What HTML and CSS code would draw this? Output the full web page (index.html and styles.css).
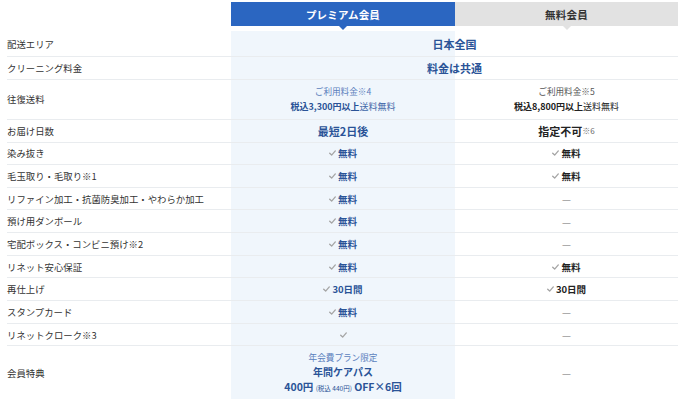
FILE: index.html
```html
<!DOCTYPE html>
<html lang="ja">
<head>
<meta charset="utf-8">
<link rel="stylesheet" href="styles.css">
</head>
<body>
<div class="table">
  <div class="head">
    <div class="hcell hempty"></div>
    <div class="hcell hprem">プレミアム会員</div>
    <div class="hcell hfree">無料会員</div>
  </div>
  <div class="body">
    <div class="row h26">
      <div class="label">配送エリア</div>
      <div class="cell span pv big">日本全国</div>
    </div>
    <div class="row h23">
      <div class="label">クリーニング料金</div>
      <div class="cell span pv big">料金は共通</div>
    </div>
    <div class="row h40">
      <div class="label">往復送料</div>
      <div class="cell col pv">
        <div class="note">ご利用料金※4</div>
        <div class="line"><b>税込3,300円以上</b>送料無料</div>
      </div>
      <div class="cell col fv">
        <div class="note">ご利用料金※5</div>
        <div class="line"><b>税込8,800円以上</b>送料無料</div>
      </div>
    </div>
    <div class="row h23">
      <div class="label">お届け日数</div>
      <div class="cell pv big">最短2日後</div>
      <div class="cell fv big">指定不可<span class="mini">※6</span></div>
    </div>
    <div class="row hs">
      <div class="label">染み抜き</div>
      <div class="cell pv chkv"><svg class="chk" viewBox="0 0 10 8"><path d="M1 4.3L3.8 7L9 1"/></svg>無料</div>
      <div class="cell fv chkv"><svg class="chk" viewBox="0 0 10 8"><path d="M1 4.3L3.8 7L9 1"/></svg>無料</div>
    </div>
    <div class="row hs">
      <div class="label">毛玉取り・毛取り※1</div>
      <div class="cell pv chkv"><svg class="chk" viewBox="0 0 10 8"><path d="M1 4.3L3.8 7L9 1"/></svg>無料</div>
      <div class="cell fv chkv"><svg class="chk" viewBox="0 0 10 8"><path d="M1 4.3L3.8 7L9 1"/></svg>無料</div>
    </div>
    <div class="row hs">
      <div class="label">リファイン加工・抗菌防臭加工・やわらか加工</div>
      <div class="cell pv chkv"><svg class="chk" viewBox="0 0 10 8"><path d="M1 4.3L3.8 7L9 1"/></svg>無料</div>
      <div class="cell fv"><span class="dash">—</span></div>
    </div>
    <div class="row hs">
      <div class="label">預け用ダンボール</div>
      <div class="cell pv chkv"><svg class="chk" viewBox="0 0 10 8"><path d="M1 4.3L3.8 7L9 1"/></svg>無料</div>
      <div class="cell fv"><span class="dash">—</span></div>
    </div>
    <div class="row hs">
      <div class="label">宅配ボックス・コンビニ預け※2</div>
      <div class="cell pv chkv"><svg class="chk" viewBox="0 0 10 8"><path d="M1 4.3L3.8 7L9 1"/></svg>無料</div>
      <div class="cell fv"><span class="dash">—</span></div>
    </div>
    <div class="row hs">
      <div class="label">リネット安心保証</div>
      <div class="cell pv chkv"><svg class="chk" viewBox="0 0 10 8"><path d="M1 4.3L3.8 7L9 1"/></svg>無料</div>
      <div class="cell fv chkv"><svg class="chk" viewBox="0 0 10 8"><path d="M1 4.3L3.8 7L9 1"/></svg>無料</div>
    </div>
    <div class="row hs">
      <div class="label">再仕上げ</div>
      <div class="cell pv chkv"><svg class="chk" viewBox="0 0 10 8"><path d="M1 4.3L3.8 7L9 1"/></svg>30日間</div>
      <div class="cell fv chkv"><svg class="chk" viewBox="0 0 10 8"><path d="M1 4.3L3.8 7L9 1"/></svg>30日間</div>
    </div>
    <div class="row hs">
      <div class="label">スタンプカード</div>
      <div class="cell pv chkv"><svg class="chk" viewBox="0 0 10 8"><path d="M1 4.3L3.8 7L9 1"/></svg>無料</div>
      <div class="cell fv"><span class="dash">—</span></div>
    </div>
    <div class="row hs">
      <div class="label">リネットクローク※3</div>
      <div class="cell pv chkv"><svg class="chk" viewBox="0 0 10 8"><path d="M1 4.3L3.8 7L9 1"/></svg></div>
      <div class="cell fv"><span class="dash">—</span></div>
    </div>
    <div class="row hlast">
      <div class="label">会員特典</div>
      <div class="cell col pv">
        <div class="note">年会費プラン限定</div>
        <div class="line strong">年間ケアパス</div>
        <div class="line strong"><span class="price">400円</span> <span class="tiny">(税込 440円)</span> <span class="price">OFF×6回</span></div>
      </div>
      <div class="cell fv"><span class="dash">—</span></div>
    </div>
  </div>
</div>
</body>
</html>
```

FILE: styles.css
```css
* { box-sizing: border-box; }
html, body { margin: 0; padding: 0; background: #fff; }
body {
  font-family: "Noto Sans CJK JP", "Noto Sans", sans-serif;
  color: #333;
  width: 680px;
  height: 400px;
  overflow: hidden;
}
.table {
  margin: 2px 0 0 7px;
  width: 671px;
}
.head {
  display: grid;
  grid-template-columns: 224px 224px 223px;
  height: 24px;
  margin-bottom: 5px;
}
.hcell {
  position: relative;
  display: flex;
  align-items: center;
  justify-content: center;
  font-size: 10.5px;
  font-weight: 700;
  letter-spacing: 0.2px;
}
.hprem { background: #2b66c1; color: #fff; }
.hfree { background: #e2e2e2; color: #333; }
.hprem::after, .hfree::after {
  content: "";
  position: absolute;
  left: 50%;
  bottom: -4px;
  margin-left: -4px;
  border-left: 4px solid transparent;
  border-right: 4px solid transparent;
  border-top: 4px solid #2b66c1;
}
.hfree::after { border-top-color: #e2e2e2; }
.body {
  background: linear-gradient(to right, transparent 224px, #f0f6fc 224px, #f0f6fc 448px, transparent 448px);
}
.row {
  display: grid;
  grid-template-columns: 224px 224px 223px;
  border-bottom: 1px solid #e9ecef;
}
.h26 { height: 26px; }
.h23 { height: 23px; }
.h40 { height: 39.5px; }
.hs { height: 22.67px; }
.hlast { height: 53px; border-bottom: none; }
.label {
  display: flex;
  align-items: center;
  font-size: 9.4px;
  color: #333;
  white-space: nowrap;
}
.cell {
  display: flex;
  align-items: center;
  justify-content: center;
  font-size: 9.5px;
  white-space: nowrap;
}
.span { grid-column: 2 / 4; }
.col { flex-direction: column; gap: 2px; line-height: 14px; }
.hlast .col { gap: 1px; }
.pv { color: #2a5397; }
.fv { color: #222; }
.big { font-size: 11px; font-weight: 700; }
.note { font-size: 8.6px; }
.pv .note { color: #5b7fbd; }
.fv .note { color: #555; }
.line { font-size: 9px; }
.line b { font-weight: 700; }
.pv .line { color: #3d66a8; }
.pv .line b, .pv .strong { color: #2a5397; }
.strong { font-weight: 700; font-size: 10px; }
.price { font-size: 10.5px; }
.tiny { font-size: 6.5px; font-weight: 400; }
.mini { font-size: 8px; font-weight: 400; color: #666; }
.chkv { font-weight: 700; font-size: 9.5px; gap: 2px; }
.chk {
  width: 7px;
  height: 6px;
  fill: none;
  stroke: #a5a5a5;
  stroke-width: 1.9;
  stroke-linecap: round;
  stroke-linejoin: round;
}
.dash { color: #9a9a9a; font-size: 10px; }
```
